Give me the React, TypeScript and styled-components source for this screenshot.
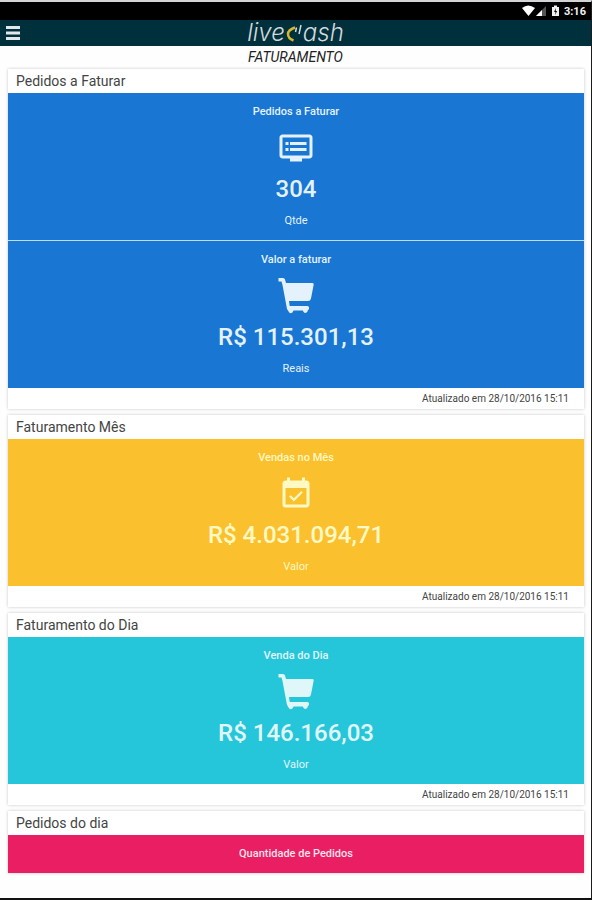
import React from "react";
import styled, { createGlobalStyle } from "styled-components";
import { MdDvr, MdEventAvailable } from "react-icons/md";

const GlobalStyle = createGlobalStyle`
  * { box-sizing: border-box; }
  body { margin: 0; background: #fff; font-family: Roboto, "Noto Sans", sans-serif; }
  h1, h2, h3, p { margin: 0; font-weight: 400; }
`;

const Screen = styled.div`
  min-height: 100vh;
  background: #fefefe;
  border-top: 2px solid #d2d4d6;
  border-right: 1px solid #1c1c1c;
  border-bottom: 2px solid #111;
`;

const StatusBar = styled.div`
  display: flex;
  align-items: center;
  justify-content: flex-end;
  height: 18px;
  padding-right: 5px;
  background: #000;
  color: #f2f2f2;
  font-size: 11px;
  font-weight: 700;
`;

const StatusIcons = styled.svg`
  display: block;
  margin-right: 4px;
`;

const Header = styled.header`
  display: grid;
  grid-template-columns: 40px 1fr 40px;
  align-items: center;
  height: 26px;
  background: #00303c;
`;

const MenuButton = styled.button`
  display: flex;
  align-items: center;
  height: 26px;
  padding: 0 0 0 6px;
  border: 0;
  background: none;
`;

const Logo = styled.div`
  display: flex;
  justify-content: center;
  align-items: center;
  color: #d3d9dc;
  font-family: Inter, sans-serif;
  font-size: 24px;
  font-style: italic;
  font-weight: 300;
  line-height: 26px;
`;

const PageTitle = styled.h1`
  padding-top: 2px;
  color: #222;
  font-size: 14px;
  font-style: italic;
  line-height: 18px;
  text-align: center;
`;

const Cards = styled.main`
  display: flex;
  flex-direction: column;
  gap: 6px;
  padding: 3px 7px 24px 8px;
`;

const Card = styled.section`
  background: #fff;
  box-shadow: 0 0 3px rgba(0, 0, 0, 0.22);
`;

const CardTitle = styled.h2`
  padding: 0 8px;
  color: #444;
  font-size: 14px;
  line-height: 24px;
`;

const Tiles = styled.div`
  display: grid;
  gap: 1px;
  background: #bbdefb;
`;

const Tile = styled.article<{ $bg: string; $fg: string }>`
  display: flex;
  flex-direction: column;
  align-items: center;
  padding: 11px;
  background: ${(p) => p.$bg};
  color: ${(p) => p.$fg};
`;

const TileLabel = styled.h3`
  font-size: 11px;
  font-weight: 500;
  line-height: 16px;
`;

const IconSlot = styled.div`
  display: flex;
  align-items: center;
  justify-content: center;
  height: 40px;
  margin-top: 8px;
`;

const Value = styled.p`
  margin-top: 6px;
  font-size: 24px;
  font-weight: 500;
  line-height: 30px;
`;

const Caption = styled.p`
  margin-top: 9px;
  font-size: 11px;
  line-height: 16px;
`;

const Updated = styled.footer`
  padding: 1px 15px 0;
  color: #444;
  font-size: 10px;
  line-height: 20px;
  text-align: right;
`;

const CartIcon = () => (
  <svg width="36" height="36" viewBox="0 0 36 36" fill="currentColor" aria-hidden="true">
    <path d="M0.500 0H5Q6.500 0 7 1.500L8 5H34.500Q36 5 35.700 6.500L33 20.500Q32.500 23 30 23H11L11.700 28H29.500Q31 28 31 29.500V31L29.700 32.500A2.300 2.300 0 0 1 25.300 33.500L24.800 32.500H15.500L15 33.500A2.300 2.300 0 0 1 10.600 33.500L9 31L4.500 7L3.500 3.500H0.500Z" />
  </svg>
);

const DvrIcon = () => <MdDvr size={36} aria-hidden="true" />;
const CalendarIcon = () => <MdEventAvailable size={36} aria-hidden="true" />;

type TileData = {
  label: string;
  icon?: React.ComponentType;
  value?: string;
  caption?: string;
};

type CardData = {
  title: string;
  bg: string;
  fg: string;
  tiles: TileData[];
  updated?: string;
};

const updatedAt = "Atualizado em 28/10/2016 15:11";

const cards: CardData[] = [
  {
    title: "Pedidos a Faturar",
    bg: "#1976d2",
    fg: "#e3f2fd",
    tiles: [
      { label: "Pedidos a Faturar", icon: DvrIcon, value: "304", caption: "Qtde" },
      { label: "Valor a faturar", icon: CartIcon, value: "R$ 115.301,13", caption: "Reais" },
    ],
    updated: updatedAt,
  },
  {
    title: "Faturamento Mês",
    bg: "#fbc02d",
    fg: "#fff9c4",
    tiles: [{ label: "Vendas no Mês", icon: CalendarIcon, value: "R$ 4.031.094,71", caption: "Valor" }],
    updated: updatedAt,
  },
  {
    title: "Faturamento do Dia",
    bg: "#26c6da",
    fg: "#e0f7fa",
    tiles: [{ label: "Venda do Dia", icon: CartIcon, value: "R$ 146.166,03", caption: "Valor" }],
    updated: updatedAt,
  },
  {
    title: "Pedidos do dia",
    bg: "#e91e63",
    fg: "#fce4ec",
    tiles: [{ label: "Quantidade de Pedidos" }],
  },
];

export default function App() {
  return (
    <Screen>
      <GlobalStyle />
      <StatusBar>
        <StatusIcons width="38" height="14" viewBox="0 0 38 14" aria-hidden="true">
          <path d="M0 4Q6-1 13 4L6.500 12Z" fill="#fff" />
          <path d="M14 12L24 2V12Z" fill="#555" />
          <path d="M14 12L20 6V12Z" fill="#fff" />
          <path d="M30 3H32V1.500H35V3H37V12H30Z" fill="#f2f2f2" />
          <path d="M34 4L32 8H33.500L33 11L35.200 7H33.800Z" fill="#111" />
        </StatusIcons>
        3:16
      </StatusBar>
      <Header>
        <MenuButton type="button" aria-label="Menu">
          <svg width="14" height="14" viewBox="0 0 14 14" fill="#e2e7e9" aria-hidden="true">
            <path d="M0 0H14V3H0ZM0 5.500H14V8.500H0ZM0 11H14V14H0Z" />
          </svg>
        </MenuButton>
        <Logo>
          <span>live</span>
          <svg width="18" height="20" viewBox="0 0 18 20" fill="none" role="img" aria-label="d">
            <path d="M10 4.500Q3 7 3 11Q3 15.500 8.500 17.500" stroke="#d9b72c" strokeWidth="2.500" />
            <path d="M11.500 4.500L10.500 9M16 2L14 11" stroke="#d3d9dc" strokeWidth="1.500" />
          </svg>
          <span>ash</span>
        </Logo>
      </Header>
      <PageTitle>FATURAMENTO</PageTitle>
      <Cards>
        {cards.map((card) => (
          <Card key={card.title}>
            <CardTitle>{card.title}</CardTitle>
            <Tiles>
              {card.tiles.map(({ label, icon: Icon, value, caption }) => (
                <Tile key={label} $bg={card.bg} $fg={card.fg}>
                  <TileLabel>{label}</TileLabel>
                  {Icon && (
                    <IconSlot>
                      <Icon />
                    </IconSlot>
                  )}
                  {value && <Value>{value}</Value>}
                  {caption && <Caption>{caption}</Caption>}
                </Tile>
              ))}
            </Tiles>
            {card.updated && <Updated>{card.updated}</Updated>}
          </Card>
        ))}
      </Cards>
    </Screen>
  );
}
